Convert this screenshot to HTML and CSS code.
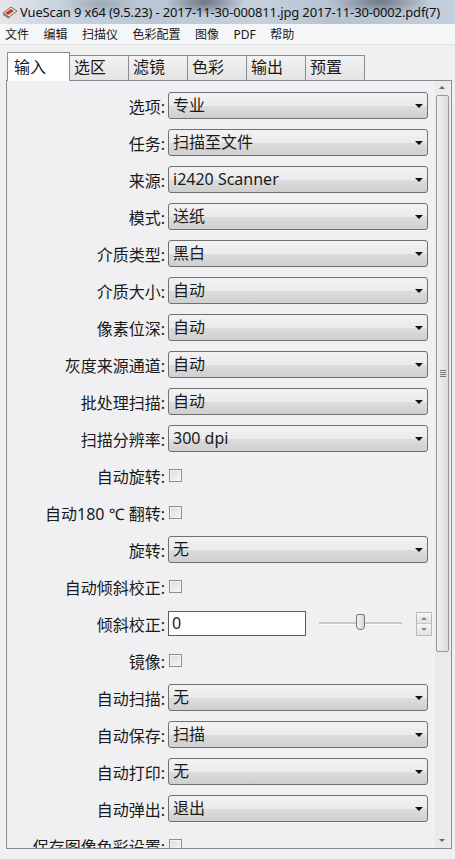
FILE: index.html
```html
<!DOCTYPE html>
<html lang="zh-CN">
<head>
    <meta charset="UTF-8">
    <title>VueScan 9 x64</title>
    <link rel="stylesheet" href="styles.css">
</head>
<body>
    <div class="titlebar">
        <svg class="app-icon" width="16" height="16" viewBox="0 0 16 16">
            <polygon points="1,9 9,3 15,7 7,13" fill="#e8e4e0" stroke="#7a6a60" stroke-width="1"/>
            <polygon points="3,9 9,5 12,7 6,11" fill="#c8382c"/>
            <polygon points="1,9 7,13 7,15 1,11" fill="#8a7a70"/>
        </svg>
        <span class="title-text">VueScan 9 x64 (9.5.23) - 2017-11-30-000811.jpg 2017-11-30-0002.pdf(7)</span>
    </div>

    <div class="menubar">
        <span>文件</span>
        <span>编辑</span>
        <span>扫描仪</span>
        <span>色彩配置</span>
        <span>图像</span>
        <span>PDF</span>
        <span>帮助</span>
    </div>

    <div class="tabs">
        <div class="tab active">输入</div>
        <div class="tab">选区</div>
        <div class="tab">滤镜</div>
        <div class="tab">色彩</div>
        <div class="tab">输出</div>
        <div class="tab">预置</div>
    </div>

    <div class="panel">
        <div class="content">
            <div class="row"><label>选项:</label><div class="select">专业</div></div>
            <div class="row"><label>任务:</label><div class="select">扫描至文件</div></div>
            <div class="row"><label>来源:</label><div class="select">i2420 Scanner</div></div>
            <div class="row"><label>模式:</label><div class="select">送纸</div></div>
            <div class="row"><label>介质类型:</label><div class="select">黑白</div></div>
            <div class="row"><label>介质大小:</label><div class="select">自动</div></div>
            <div class="row"><label>像素位深:</label><div class="select">自动</div></div>
            <div class="row"><label>灰度来源通道:</label><div class="select">自动</div></div>
            <div class="row"><label>批处理扫描:</label><div class="select">自动</div></div>
            <div class="row"><label>扫描分辨率:</label><div class="select">300 dpi</div></div>
            <div class="row"><label>自动旋转:</label><span class="check"></span></div>
            <div class="row"><label>自动180 ℃ 翻转:</label><span class="check"></span></div>
            <div class="row"><label>旋转:</label><div class="select">无</div></div>
            <div class="row"><label>自动倾斜校正:</label><span class="check"></span></div>
            <div class="row">
                <label>倾斜校正:</label>
                <div class="field-group">
                    <div class="textbox">0</div>
                    <div class="slider"><span class="thumb"></span></div>
                    <div class="spinner"><span class="up"></span><span class="down"></span></div>
                </div>
            </div>
            <div class="row"><label>镜像:</label><span class="check"></span></div>
            <div class="row"><label>自动扫描:</label><div class="select">无</div></div>
            <div class="row"><label>自动保存:</label><div class="select">扫描</div></div>
            <div class="row"><label>自动打印:</label><div class="select">无</div></div>
            <div class="row"><label>自动弹出:</label><div class="select">退出</div></div>
            <div class="row"><label>保存图像色彩设置:</label><span class="check"></span></div>
        </div>
        <div class="scrollbar">
            <span class="arrow arrow-up"></span>
            <div class="track"><div class="sb-thumb"><span class="grip"></span></div></div>
            <span class="arrow arrow-down"></span>
        </div>
    </div>
</body>
</html>
```

FILE: styles.css
```css
body {
    margin: 0;
    width: 455px;
    height: 859px;
    overflow: hidden;
    background: #f0f0f0;
    font-family: "Noto Sans", "Noto Sans CJK SC", sans-serif;
    color: #1a1a1a;
}

.titlebar {
    height: 24px;
    display: flex;
    align-items: center;
    padding-left: 2px;
    overflow: hidden;
    background:
        radial-gradient(ellipse 40px 14px at 205px 2px, rgba(40,45,55,0.55), transparent),
        radial-gradient(ellipse 50px 14px at 380px 2px, rgba(40,45,55,0.5), transparent),
        radial-gradient(ellipse 40px 12px at 100px 4px, rgba(90,100,120,0.35), transparent),
        linear-gradient(90deg, #e4e6ea 0px, #c9d2de 60px, #b9c6d6 150px, #c7d1dd 260px, #b5c2d2 330px, #c3cfdc 455px);
}
.app-icon {
    flex-shrink: 0;
    margin-right: 2px;
}
.title-text {
    font-size: 13px;
    letter-spacing: -0.15px;
    color: #111;
    white-space: nowrap;
}

.menubar {
    height: 20px;
    display: flex;
    align-items: center;
    gap: 14.5px;
    padding-left: 5px;
    background: #f5f6f7;
    font-size: 12px;
    border-bottom: 1px solid #e3e5e8;
}

.tabs {
    display: flex;
    align-items: flex-end;
    height: 28px;
    margin-top: 7px;
    padding-left: 7px;
}
.tab {
    width: 54px;
    height: 24px;
    padding-left: 4px;
    font-size: 16px;
    line-height: 22px;
    border: 1px solid #898c95;
    border-bottom: none;
    margin-right: -1px;
    background: linear-gradient(#f3f3f3, #e3e3e3);
}
.tab.active {
    width: 55px;
    height: 28px;
    padding-left: 6px;
    line-height: 28px;
    background: #fff;
    position: relative;
    z-index: 1;
    margin-bottom: -1px;
}

.panel {
    display: flex;
    height: 767px;
    margin: 0 3px 0 6px;
    border: 1px solid #898c95;
    background: #f0f0f2;
    overflow: hidden;
}
.content {
    flex: 1;
    padding-top: 6px;
}
.row {
    display: flex;
    align-items: center;
    height: 37px;
}
.row label {
    width: 158px;
    text-align: right;
    font-size: 16px;
    padding-right: 3px;
    white-space: nowrap;
    flex-shrink: 0;
}
.select {
    width: 254px;
    height: 25px;
    padding-left: 4px;
    font-size: 16px;
    line-height: 25px;
    border: 1px solid #707070;
    border-radius: 3px;
    background: linear-gradient(#f2f2f2 0%, #ebebeb 50%, #dddddd 51%, #cfcfcf 100%);
    position: relative;
}
.select::after {
    content: "";
    position: absolute;
    right: 4px;
    top: 11px;
    border-left: 4px solid transparent;
    border-right: 4px solid transparent;
    border-top: 4px solid #111;
}
.check {
    width: 11px;
    height: 11px;
    margin-left: 1px;
    border: 1px solid #8e8f8f;
    background: linear-gradient(135deg, #dcdcdc, #f6f6f6);
    box-shadow: inset 0 0 0 1px #f4f4f4;
}

.field-group {
    display: flex;
    align-items: center;
    width: 264px;
}
.textbox {
    width: 133px;
    height: 23px;
    padding-left: 3px;
    background: #fff;
    border: 1px solid #5c5c5c;
    font-size: 16px;
    line-height: 23px;
}
.slider {
    width: 83px;
    height: 2px;
    margin-left: 13px;
    background: #c8c8c8;
    border-bottom: 1px solid #fff;
    position: relative;
}
.thumb {
    position: absolute;
    left: 37px;
    top: -8px;
    width: 7px;
    height: 14px;
    border: 1px solid #777;
    border-radius: 2px 2px 4px 4px;
    background: linear-gradient(90deg, #f4f4f4, #d6d6d6);
}
.spinner {
    margin-left: auto;
    width: 14px;
    height: 22px;
    border: 1px solid #b9b9b9;
    display: flex;
    flex-direction: column;
}
.spinner span {
    flex: 1;
    background: linear-gradient(#f6f6f6, #e2e2e2);
    position: relative;
}
.spinner .up { border-bottom: 1px solid #c8c8c8; }
.spinner span::after {
    content: "";
    position: absolute;
    left: 4px;
    top: 4px;
    border-left: 3px solid transparent;
    border-right: 3px solid transparent;
}
.spinner .up::after { border-bottom: 3px solid #888; }
.spinner .down::after { border-top: 3px solid #888; }

.scrollbar {
    width: 15px;
    margin-right: 1px;
    display: flex;
    flex-direction: column;
    background: #eaeaea;
}
.arrow {
    height: 14px;
    position: relative;
}
.arrow::after {
    content: "";
    position: absolute;
    left: 4px;
    border-left: 3px solid transparent;
    border-right: 3px solid transparent;
}
.arrow-up::after { top: 5px; border-bottom: 3px solid #666; }
.arrow-down::after { top: 5px; border-top: 3px solid #666; }
.track {
    flex: 1;
}
.sb-thumb {
    height: 555px;
    margin: 0 1px;
    border: 1px solid #979797;
    border-radius: 2px;
    background: linear-gradient(90deg, #f0f0f0, #dcdcdc);
    position: relative;
}
.grip {
    position: absolute;
    left: 3px;
    top: 274px;
    width: 6px;
    height: 7px;
    background: repeating-linear-gradient(#7a7a7a 0 1px, transparent 1px 2px);
}
```
